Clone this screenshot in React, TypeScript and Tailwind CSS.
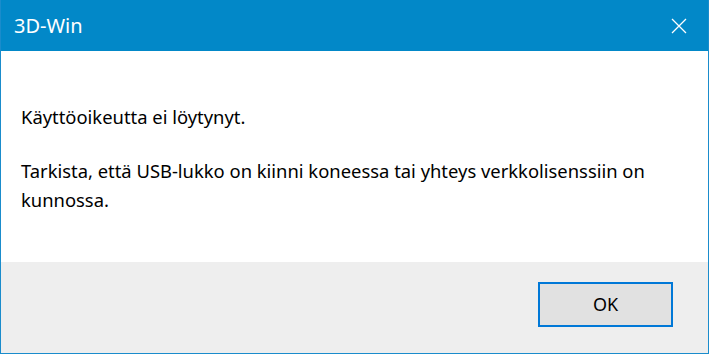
export default function App() {
  return (
    <div className="w-[709px] h-[354px] flex flex-col bg-white border border-t-0 border-[#1a8ccc] font-['Noto_Sans',sans-serif] text-black overflow-hidden">
      <div className="h-[51px] shrink-0 -mx-px bg-[#0288c8] flex items-center justify-between pl-[14px] pr-[22px]">
        <span className="text-white text-[20px] mt-[1px]">3D-Win</span>
        <svg width="16" height="16" viewBox="0 0 16 16" className="text-white">
          <path d="M1 1L15 15M15 1L1 15" stroke="currentColor" strokeWidth="1.3" fill="none" />
        </svg>
      </div>
      <div className="flex-1 pl-[20px] pr-[20px] pt-[51px] text-[18.4px] leading-[29px]">
        <p>Käyttöoikeutta ei löytynyt.</p>
        <p className="mt-[25px] w-[660px]">
          Tarkista, että USB-lukko on kiinni koneessa tai yhteys verkkolisenssiin on kunnossa.
        </p>
      </div>
      <div className="h-[91px] shrink-0 bg-[#eeeeee] flex items-start justify-end pt-[20px] pr-[35px]">
        <button className="w-[135px] h-[45px] bg-[#e1e1e1] border-2 border-[#0078d7] text-[18px]">OK</button>
      </div>
    </div>
  );
}
